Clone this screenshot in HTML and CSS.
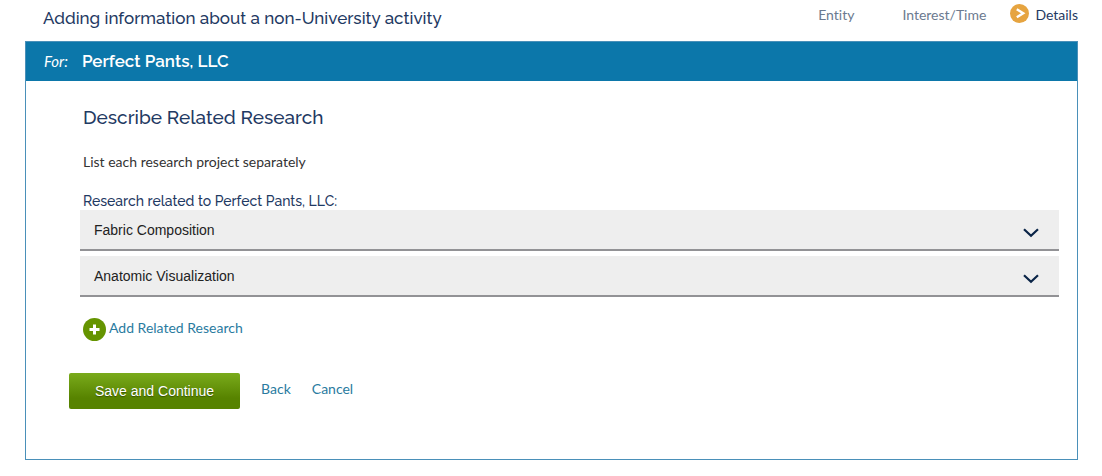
FILE: index.html
```html
<!DOCTYPE html>
<html lang="en">
<head>
    <meta charset="UTF-8">
    <meta name="viewport" content="width=device-width, initial-scale=1.0">
    <title>Related Research</title>
    <link rel="stylesheet" href="styles.css">
</head>
<body>
    <header class="page-header">
        <h1>Adding information about a non-University activity</h1>
        <ol class="steps">
            <li>Entity</li>
            <li>Interest/Time</li>
            <li class="current" aria-current="step">
                <svg width="19" height="19" viewBox="0 0 19 19" aria-hidden="true">
                    <circle cx="9.5" cy="9.5" r="9.5" fill="#e6a440"/>
                    <path d="M6.8 5.3 13.2 9.3 6.8 13.3" fill="none" stroke="#fff" stroke-width="2.4"/>
                </svg>
                Details
            </li>
        </ol>
    </header>

    <main class="panel">
        <div class="panel-header">
            <span class="for">For:</span>
            <h2>Perfect Pants, LLC</h2>
        </div>

        <div class="panel-body">
            <h3>Describe Related Research</h3>
            <p class="hint">List each research project separately</p>

            <h4>Research related to Perfect Pants, LLC:</h4>
            <div class="research-list">
                <button type="button" class="research-item" aria-expanded="false">
                    Fabric Composition
                    <svg width="16" height="10" viewBox="0 0 16 10" aria-hidden="true">
                        <path d="M1 1.2 8 7.8 15 1.2" fill="none" stroke="#0a2447" stroke-width="2.2"/>
                    </svg>
                </button>
                <button type="button" class="research-item" aria-expanded="false">
                    Anatomic Visualization
                    <svg width="16" height="10" viewBox="0 0 16 10" aria-hidden="true">
                        <path d="M1 1.2 8 7.8 15 1.2" fill="none" stroke="#0a2447" stroke-width="2.2"/>
                    </svg>
                </button>
            </div>

            <a href="#" class="add-link">
                <svg width="23" height="23" viewBox="0 0 23 23" aria-hidden="true">
                    <circle cx="11.5" cy="11.5" r="11.5" fill="#659400"/>
                    <path d="M11.5 6.5v10M6.5 11.5h10" stroke="#fff" stroke-width="3"/>
                </svg>
                <span>Add Related Research</span>
            </a>
        </div>

        <div class="actions">
            <button type="submit" class="save">Save and Continue</button>
            <a href="#">Back</a>
            <a href="#">Cancel</a>
        </div>
    </main>
</body>
</html>
```
FILE: styles.css
```css
body {
    font-family: Lato, sans-serif;
    font-size: 14px;
    line-height: 20px;
    font-variant-ligatures: none;
    color: #333;
    background-color: #fff;
    margin: 0;
    padding: 4px 24px 16px 25px;
}

h1, h2, h3, h4 {
    font-family: Raleway, Lato, sans-serif;
    font-weight: 500;
    color: #1f3a63;
    margin: 0;
}

h1, h2 {
    font-size: 17px;
    line-height: 28px;
}

a {
    color: #2a7b9f;
    text-decoration: none;
}

a:hover {
    text-decoration: underline;
}

button {
    font-family: "Liberation Sans", Arial, sans-serif;
    font-size: 14px;
    border: none;
    cursor: pointer;
}

.page-header {
    display: flex;
    justify-content: space-between;
    align-items: flex-start;
    padding-left: 18px;
    height: 37px;
}

.steps {
    display: flex;
    list-style: none;
    margin: 0;
    padding: 0;
    color: #6b7a90;
}

.steps li {
    margin-left: 48px;
    line-height: 22px;
}

.steps .current {
    display: flex;
    gap: 6px;
    margin-left: 24px;
    color: #1f3a63;
}

.panel {
    border: 1px solid #4a90b9;
    padding-bottom: 50px;
}

.panel-header {
    display: flex;
    align-items: baseline;
    gap: 14px;
    background-color: #0c77aa;
    padding: 5px 18px 6px;
}

.panel-header h2 {
    color: #fff;
    font-weight: 600;
}

.for {
    color: #fff;
    font-size: 15px;
    font-style: italic;
}

.panel-body {
    padding: 22px 18px 0 54px;
}

h3, .hint, h4 {
    padding-left: 3px;
}

h3 {
    font-size: 19px;
    line-height: 28px;
}

.hint {
    margin: 21px 0 20px;
}

h4 {
    font-size: 14px;
    line-height: 18px;
}

.research-list {
    display: grid;
    gap: 5px;
}

.research-item {
    display: flex;
    justify-content: space-between;
    align-items: center;
    height: 41px;
    padding: 0 20px 0 14px;
    color: #222;
    text-align: left;
    background-color: #eee;
    border-bottom: 2px solid #929295;
}

.research-item svg {
    margin-top: 6px;
}

.add-link {
    display: inline-flex;
    gap: 3px;
    margin: 21px 0 0 3px;
}

.actions {
    display: flex;
    align-items: center;
    gap: 21px;
    padding: 27px 43px 0;
}

.actions a {
    padding-bottom: 4px;
}

.save {
    height: 36px;
    padding: 0 26px;
    color: #fff;
    text-shadow: 0 1px 1px rgba(0, 0, 0, 0.4);
    background: linear-gradient(#7aab1b, #578300 70%);
    border-radius: 2px;
}
```
